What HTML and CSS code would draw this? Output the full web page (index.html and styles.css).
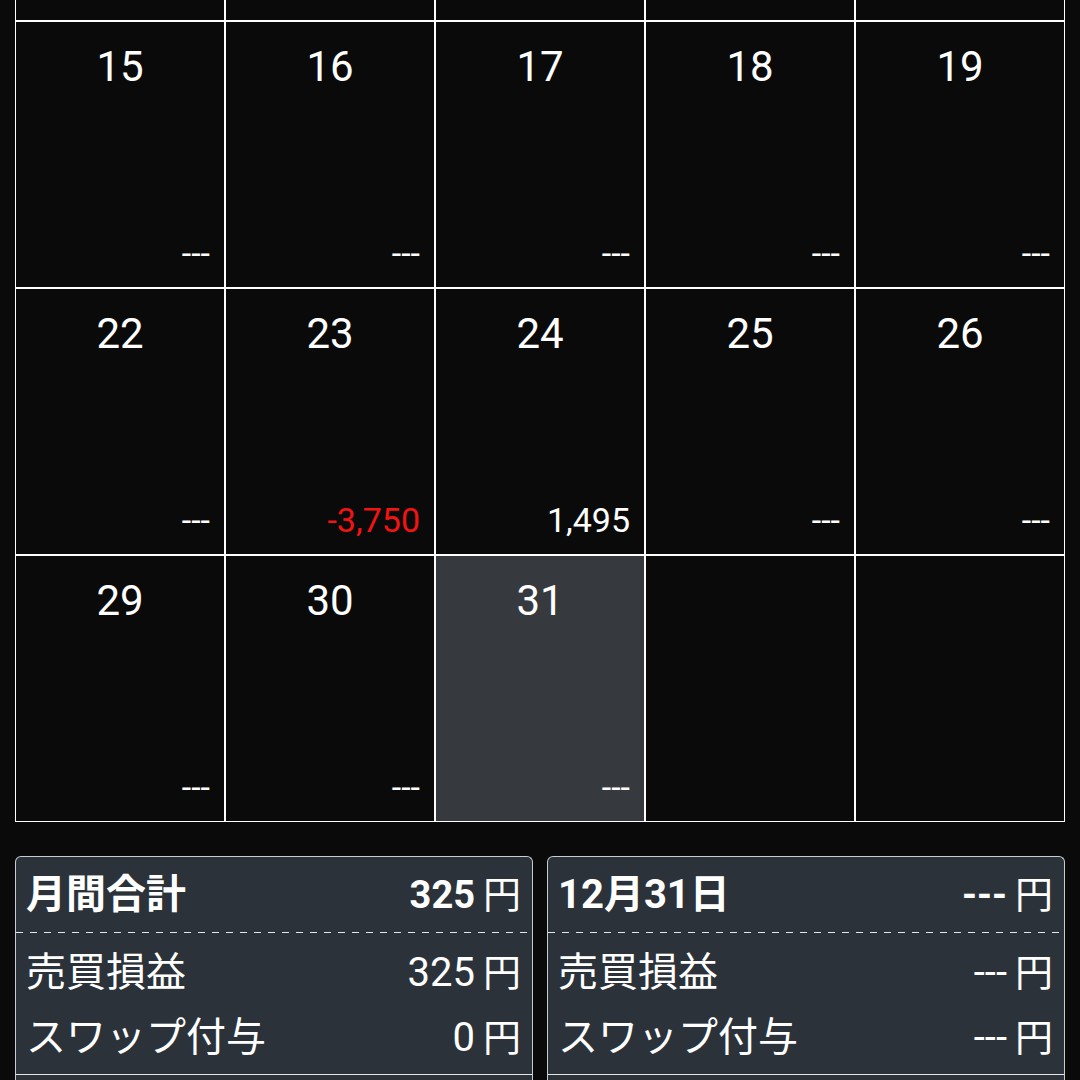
FILE: index.html
```html
<!DOCTYPE html>
<html lang="ja">
<head>
<meta charset="utf-8">
<link rel="stylesheet" href="styles.css">
</head>
<body>
<div class="calendar">
  <div class="cell"></div>
  <div class="cell"></div>
  <div class="cell"></div>
  <div class="cell"></div>
  <div class="cell"></div>

  <div class="cell"><div class="day">15</div><div class="amt">---</div></div>
  <div class="cell"><div class="day">16</div><div class="amt">---</div></div>
  <div class="cell"><div class="day">17</div><div class="amt">---</div></div>
  <div class="cell"><div class="day">18</div><div class="amt">---</div></div>
  <div class="cell"><div class="day">19</div><div class="amt">---</div></div>

  <div class="cell"><div class="day">22</div><div class="amt">---</div></div>
  <div class="cell"><div class="day">23</div><div class="amt neg">-3,750</div></div>
  <div class="cell"><div class="day">24</div><div class="amt">1,495</div></div>
  <div class="cell"><div class="day">25</div><div class="amt">---</div></div>
  <div class="cell"><div class="day">26</div><div class="amt">---</div></div>

  <div class="cell"><div class="day">29</div><div class="amt">---</div></div>
  <div class="cell"><div class="day">30</div><div class="amt">---</div></div>
  <div class="cell today"><div class="day">31</div><div class="amt">---</div></div>
  <div class="cell"></div>
  <div class="cell"></div>
</div>

<div class="summary">
  <div class="panel">
    <div class="head">
      <span class="label">月間合計</span>
      <span class="value"><span class="num">325</span><span class="yen">円</span></span>
    </div>
    <div class="dash"></div>
    <div class="rows">
      <div class="row"><span class="label">売買損益</span><span class="value"><span class="num">325</span><span class="yen">円</span></span></div>
      <div class="row"><span class="label">スワップ付与</span><span class="value"><span class="num">0</span><span class="yen">円</span></span></div>
    </div>
    <div class="more"></div>
  </div>
  <div class="panel">
    <div class="head">
      <span class="label">12月31日</span>
      <span class="value"><span class="num">---</span><span class="yen">円</span></span>
    </div>
    <div class="dash"></div>
    <div class="rows">
      <div class="row"><span class="label">売買損益</span><span class="value"><span class="num">---</span><span class="yen">円</span></span></div>
      <div class="row"><span class="label">スワップ付与</span><span class="value"><span class="num">---</span><span class="yen">円</span></span></div>
    </div>
    <div class="more"></div>
  </div>
</div>
</body>
</html>
```

FILE: styles.css
```css
html, body {
  margin: 0;
  padding: 0;
  background: #0a0a0a;
  color: #ffffff;
  font-family: Roboto, "Noto Sans CJK JP", sans-serif;
  overflow: hidden;
}

body {
  width: 1080px;
  height: 1080px;
}

.calendar {
  display: grid;
  grid-template-columns: repeat(5, 210px);
  grid-auto-rows: 267px;
  margin: -246px 15px 0 15px;
}

.cell {
  box-sizing: border-box;
  border: 1px solid #ffffff;
  display: flex;
  flex-direction: column;
  justify-content: space-between;
  background: #0a0a0a;
}

.cell.today {
  background: #363a3e;
}

.day {
  font-size: 42px;
  line-height: 42px;
  text-align: center;
  padding-top: 24px;
}

.amt {
  font-size: 34px;
  line-height: 34px;
  text-align: right;
  padding: 0 14px 17px 0;
}

.amt.neg {
  color: #f21313;
}

.summary {
  display: grid;
  grid-template-columns: 1fr 1fr;
  column-gap: 14px;
  margin: 34px 15px 0 15px;
}

.panel {
  border: 1px solid #c9ccd0;
  border-bottom: none;
  border-radius: 6px 6px 0 0;
  background: #2b323a;
}

.head {
  height: 75px;
  display: flex;
  align-items: center;
  justify-content: space-between;
  padding: 0 11px 0 10px;
  font-size: 40px;
  line-height: 40px;
  font-weight: 700;
}

.head .num {
  font-size: 38px;
}

.head .yen {
  font-weight: 400;
}

.dash {
  height: 1px;
  background: repeating-linear-gradient(to right, #e6e6e6 0 7px, transparent 7px 14px);
}

.rows {
  padding: 7px 11px 4px 10px;
}

.row {
  height: 65px;
  display: flex;
  align-items: center;
  justify-content: space-between;
  font-size: 40px;
  line-height: 40px;
}

.yen {
  margin-left: 8px;
  font-size: 38px;
}

.more {
  height: 60px;
  border-top: 1px solid #e6e6e6;
}
```
